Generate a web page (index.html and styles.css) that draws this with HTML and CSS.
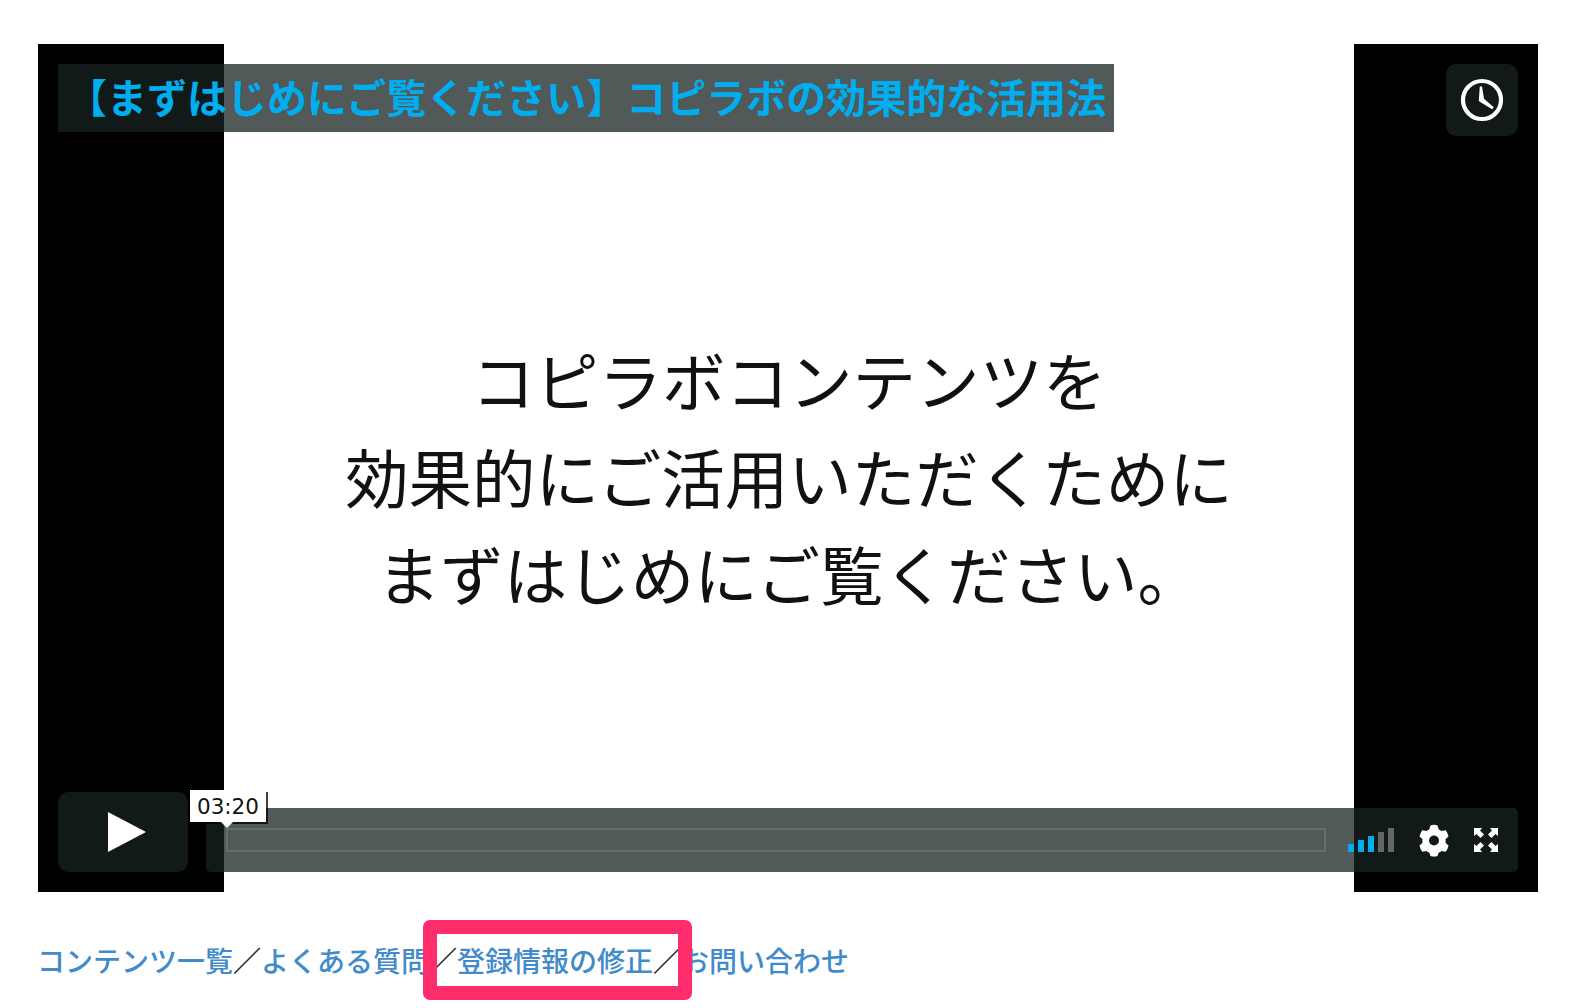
FILE: index.html
```html
<!DOCTYPE html>
<html lang="ja">
<head>
<meta charset="utf-8">
<title>コピラボ</title>
<link rel="stylesheet" href="styles.css">
</head>
<body>
<main class="page">
  <section class="player">
    <div class="letterbox"></div>
    <div class="slide">
      <p>コピラボコンテンツを</p>
      <p>効果的にご活用いただくために</p>
      <p>まずはじめにご覧ください。</p>
    </div>
    <div class="letterbox letterbox-right"></div>

    <h1 class="video-title">【まずはじめにご覧ください】コピラボの効果的な活用法</h1>
    <button class="later" aria-label="後で見る">
      <svg viewBox="0 0 48 48" width="48" height="48"><circle cx="24" cy="24" r="19" fill="none" stroke="#fff" stroke-width="4.2"/><path d="M21.800 10.500h2.200l2 12.300 9.800 8.500-1.700 2-12.400-7.500-.9-1.300z" fill="#fff"/></svg>
    </button>
    <div class="controls">
      <button class="play" aria-label="再生">
        <svg viewBox="0 0 38 40" width="38" height="40"><path d="M0 0 38 20 0 40z" fill="#fff"/></svg>
      </button>
      <div class="bar">
        <div class="track"></div>
        <div class="volume">
          <i class="on h1"></i><i class="on h2"></i><i class="on h3"></i><i class="h4"></i><i class="h5"></i>
        </div>
        <svg class="gear" viewBox="0 0 30 33" width="30" height="33"><path fill="#fff" fill-rule="evenodd" d="M11.500 1.500Q15 0 18.500 1.500L19.800 5.400Q21.400 6 22.600 7.100L26.700 6.200Q29 9.300 29.500 12.600L26.500 15.300Q26.800 16.900 26.500 18.700L29.500 21.400Q29 24.700 26.700 27.800L22.600 26.900Q21.400 28 19.800 28.600L18.500 32Q15 33 11.500 32L10.200 28.600Q8.600 28 7.400 26.900L3.300 27.800Q1 24.700.5 21.400L3.500 18.700Q3.200 16.900 3.500 15.300L.5 12.600Q1 9.300 3.300 6.200L7.400 7.100Q8.600 6 10.200 5.400zM15 11.500a5 5 0 1 0 0 10 5 5 0 1 0 0-10z"/></svg>
        <svg class="full" viewBox="0 0 24 24" width="24" height="24"><path fill="#fff" d="M0 0h8L6 2.500 10 6.500 6.500 10 2.500 6 0 8zM24 0v8L21.500 6 17.500 10 14 6.500 18 2.500 16 0zM0 24v-8L2.500 18 6.500 14 10 17.500 6 21.500 8 24zM24 24h-8L18 21.500 14 17.500 17.500 14 21.500 18 24 16z"/></svg>
      </div>
      <div class="time-tip">03:20</div>
    </div>
  </section>

  <nav class="links">
    <a href="#">コンテンツ一覧</a><span>／</span><a href="#">よくある質問</a><span>／</span><a href="#">登録情報の修正</a><span>／</span><a href="#">お問い合わせ</a>
    <div class="highlight"></div>
  </nav>
</main>
</body>
</html>
```
FILE: styles.css
```css
* { box-sizing: border-box; }
html, body { margin: 0; background: #fff; }
body { font-family: "Noto Sans CJK JP", "Liberation Sans", sans-serif; overflow: hidden; }
.page { padding: 44px 42px 0 38px; height: 1008px; }

.player { position: relative; display: flex; height: 848px; }
.letterbox { width: 186px; background: #000; flex: none; }
.letterbox-right { width: 184px; }
.slide { flex: 1; display: flex; flex-direction: column; align-items: center; justify-content: center; padding-top: 14px; background: #fff; color: #111; }
.slide p { margin: 0; font-size: 63.5px; line-height: 97px; font-weight: 400; }

.video-title { position: absolute; left: 20px; top: 20px; margin: 0; height: 68px; padding: 0 8px 0 9px; background: rgba(23,35,34,.75); color: #00aef0; font-size: 40px; line-height: 64px; font-weight: 700; white-space: nowrap; }
.later { position: absolute; right: 20px; top: 20px; width: 72px; height: 72px; border: 0; padding: 0; border-radius: 10px; background: rgba(23,35,34,.75); display: flex; align-items: center; justify-content: center; }

.controls { position: absolute; left: 20px; right: 20px; bottom: 20px; height: 80px; display: flex; align-items: flex-end; gap: 18px; }
.play { width: 130px; height: 80px; border: 0; padding: 0 0 0 8px; border-radius: 10px; background: rgba(23,35,34,.75); display: flex; align-items: center; justify-content: center; flex: none; }
.bar { flex: 1; height: 64px; display: flex; align-items: center; padding: 0 20px; background: rgba(23,35,34,.75); border-radius: 0 5px 5px 5px; }
.track { flex: 1; height: 24px; border: 2px solid rgba(255,255,255,.12); }
.volume { display: flex; align-items: flex-end; gap: 4px; height: 24px; margin: 0 25px 0 22px; }
.volume i { display: block; width: 6px; background: #666; }
.volume i.on { background: #00adef; }
.h1 { height: 8px; } .h2 { height: 12px; } .h3 { height: 16px; } .h4 { height: 20px; } .h5 { height: 24px; }
.gear { margin-right: 25px; flex: none; }
.full { flex: none; }
.time-tip { position: absolute; left: 132px; top: -2px; width: 76px; height: 32px; background: #fff; color: #111; font: 21.5px/34px "DejaVu Sans", sans-serif; text-align: center; box-shadow: 2px 2px 0 rgba(0,0,0,.75); }
.time-tip::after { content: ""; position: absolute; left: 31px; top: 32px; border: 6px solid transparent; border-top-color: #fff; border-bottom: 0; }

.links { position: relative; margin: 48px 0 0 -1px; font-size: 28px; line-height: 40px; white-space: nowrap; color: #222; }
.links a { color: #428bca; text-decoration: none; font-weight: 500; }
.links span { font-weight: 700; }
.highlight { position: absolute; left: 386px; top: -20px; width: 269px; height: 80px; border: 14px solid #ff2d6b; border-radius: 7px; }
```
